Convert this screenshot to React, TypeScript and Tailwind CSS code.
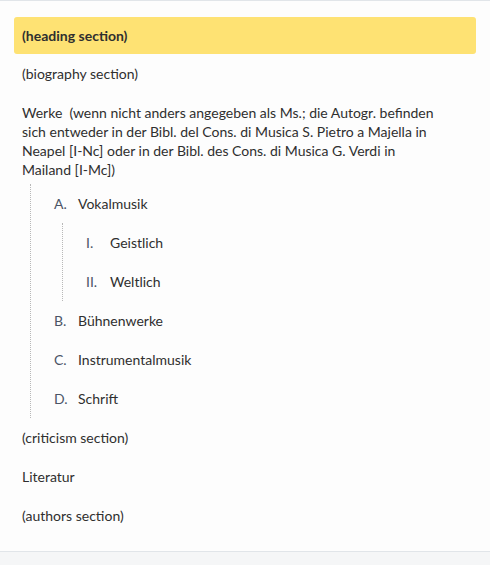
const font = { fontFamily: "Lato, 'Noto Sans', sans-serif" };

type Item = { marker: string; label: string; children?: Item[] };

const WORKS: Item[] = [
  {
    marker: "A.",
    label: "Vokalmusik",
    children: [
      { marker: "I.", label: "Geistlich" },
      { marker: "II.", label: "Weltlich" },
    ],
  },
  { marker: "B.", label: "Bühnenwerke" },
  { marker: "C.", label: "Instrumentalmusik" },
  { marker: "D.", label: "Schrift" },
];

function Outline({ items, nested }: { items: Item[]; nested?: boolean }) {
  return (
    <ul className={nested ? "ml-2 border-l border-dotted border-[#b8b8b8]" : "ml-4 border-l border-dotted border-[#b8b8b8]"}>
      {items.map((it) => (
        <li key={it.marker} className="pl-[23px]">
          <div className="flex py-[10px]">
            <span className="w-6 shrink-0 text-[#4b5466]">{it.marker}</span>
            <span>{it.label}</span>
          </div>
          {it.children && <Outline items={it.children} nested />}
        </li>
      ))}
    </ul>
  );
}

export default function App() {
  return (
    <div style={font} className="min-h-[565px] bg-[#f5f6f7] text-[14px] leading-[19px] text-[#2f2f2f]">
      <div className="border-t border-b border-[#e1e5e9] bg-[#fdfdfd] px-[14px] pt-4 pb-4">
        <div className="rounded-[3px] bg-[#fee273] px-2 py-[9px] font-bold">(heading section)</div>

        <div className="px-2 py-[10px]">(biography section)</div>

        <div className="pt-[10px] pb-[5px] pl-2 pr-9">
          Werke&nbsp; (wenn nicht anders angegeben als Ms.; die Autogr. befinden sich entweder in der Bibl. del Cons. di Musica S. Pietro a Majella in Neapel [I-Nc] oder in der Bibl. des Cons. di Musica G. Verdi in Mailand [I-Mc])
        </div>

        <Outline items={WORKS} />

        <div className="px-2 py-[10px]">(criticism section)</div>
        <div className="px-2 py-[10px]">Literatur</div>
        <div className="px-2 py-[10px]">(authors section)</div>
      </div>
    </div>
  );
}
